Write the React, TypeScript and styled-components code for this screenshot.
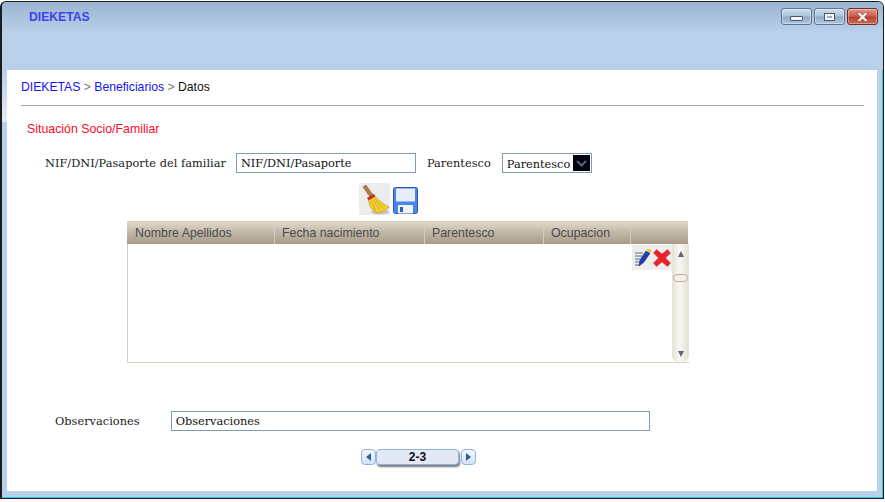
import React from "react";
import styled, { createGlobalStyle } from "styled-components";

const Global = createGlobalStyle`
  html, body { margin: 0; padding: 0; background: #fff; }
  #root { width: 885px; height: 502px; overflow: hidden; }
`;

const Desktop = styled.div`
  width: 885px; height: 502px; background: #fff; overflow: hidden;
  display: flex; flex-direction: column;
`;
const Win = styled.div`
  width: 884px; height: 498px; box-sizing: border-box; flex: none;
  margin-top: 1px;
  border: 1px solid #1c1c1c; border-left-width: 2px; border-bottom-width: 1px;
  border-radius: 6px 6px 0 0;
  background: linear-gradient(#b8d0e9, #e2ebf6) 0 66px / 5px 54px no-repeat, #b8d0e9;
  box-shadow: inset -1px -1px 0 #38c4ea;
  display: flex; flex-direction: column;
`;
const TitleBar = styled.div`
  height: 68px; flex: none; box-sizing: border-box; display: flex; justify-content: space-between; align-items: flex-start;
  background: linear-gradient(#9ab5d2 0, #b8d0e9 30px, #b8d0e9 100%);
  border-radius: 5px 5px 0 0;
  padding: 6px 5px 0 27px;
`;
const AppName = styled.div`
  font: bold 12.2px "Liberation Sans", sans-serif; color: #3f3ff0; line-height: 18px;
`;
const WinBtns = styled.div`display: flex; gap: 2px;`;
const WinBtn = styled.div<{ $close?: boolean }>`
  width: 31px; height: 17px; box-sizing: border-box; border-radius: 3px; display: flex; align-items: center; justify-content: center;
  border: 1px solid ${p => (p.$close ? "#7a2a24" : "#5e7690")};
  background: ${p => p.$close
    ? "linear-gradient(#e39a8c 0, #d0604e 45%, #b8402f 55%, #cf6a56 100%)"
    : "linear-gradient(#cfdff0 0, #abc2da 48%, #8ea9c6 52%, #b0c8e0 100%)"};
  box-shadow: inset 0 0 0 1px rgba(255,255,255,.35);
`;
const MinGlyph = styled.div`width: 11px; height: 3px; margin-top: 4px; background: #f3f5f8; border: 1px solid #46586c; border-radius: 1px;`;
const MaxGlyph = styled.div`width: 5px; height: 2px; border: 2px solid #f3f5f8; outline: 1px solid #46586c;`;
const Panel = styled.div`
  flex: none; height: 421px; margin: 0 6px 0 5px; background: #fff; box-sizing: border-box;
  padding: 10px 13px 0 14px; display: flex; flex-direction: column;
`;
const Crumbs = styled.div`
  font: 12.2px/15px "Liberation Sans", sans-serif; color: #777; height: 25px;
`;
const CrumbLink = styled.span`color: #1414f0;`;
const CrumbHere = styled.span`color: #111;`;
const Rule = styled.div`height: 1px; background: #a9a79f; flex: none;`;
const SectionTitle = styled.div`
  font: 12.35px/15px "Liberation Sans", sans-serif; color: #fb0a2a; margin: 16px 0 0 6px;
`;
const FormRow = styled.div`
  display: flex; align-items: center; margin: 16px 0 0 24px; height: 20px;
`;
const Label = styled.label`
  font: 11.33px "DejaVu Serif", serif; color: #1a1a1a; white-space: nowrap; letter-spacing: 0.03px;
`;
const Field = styled.div<{ $w: number; $gap: number }>`
  width: ${p => p.$w}px; height: 20px; box-sizing: border-box; border: 1px solid #7c9cbb; background: #fff;
  margin-left: ${p => p.$gap}px; flex: none;
  font: 11.33px/19px "DejaVu Serif", serif; color: #111; padding-left: 4px; white-space: nowrap;
`;
const FakeSelect = styled(Field)`
  display: flex; align-items: center; justify-content: space-between; padding-right: 1px;
`;
const SelText = styled.span`margin-top: 2px;`;
const SelArrow = styled.div`
  width: 17px; height: 16px; background: #04040f; display: flex; align-items: center; justify-content: center; flex: none;
`;
const LabelGap = styled.div<{ $w: number }>`width: ${p => p.$w}px; flex: none;`;
const Tools = styled.div`
  display: flex; gap: 3px; margin: 10px 0 0 338px; height: 33px; align-items: flex-start;
`;
const ToolIcon = styled.div`
  width: 31px; height: 32px; background: #ececec; display: flex; align-items: center; justify-content: center;
`;
const PlainIcon = styled.div`margin-top: 4px; width: 25px; height: 27px;`;
const Grid = styled.div`
  width: 562px; margin: 5px 0 0 106px; height: 142px; flex: none; display: flex; flex-direction: column;
  box-sizing: border-box; border: 1px solid #d7d0bf; border-right: none; border-top: none; position: relative;
`;
const GridHead = styled.div`
  display: flex; height: 23px; flex: none; box-sizing: border-box;
  margin-left: -1px; margin-right: 1px;
  border-top: 1px solid #d9cfbd;
  background: linear-gradient(#dfd8cb 0, #c6bcab 40%, #a79b88 100%);
`;
const HeadCell = styled.div<{ $w: number; $last?: boolean; $first?: boolean }>`
  width: ${p => p.$w}px; flex: none; box-sizing: border-box; padding-left: ${p => (p.$first ? 8 : 7)}px;
  font: 12.35px/22px "Liberation Sans", sans-serif; color: #4a4a52;
  border-right: ${p => (p.$last ? "none" : "1px solid #d5ccbb")}; white-space: nowrap;
`;
const GridBody = styled.div`flex: 1; display: flex; justify-content: flex-end; min-height: 0;`;
const RowActions = styled.div`
  display: flex; align-items: center; height: 25px; width: 40px; background: #eeeeee; margin-top: 1px; gap: 1px; padding-left: 2px; box-sizing: border-box;
`;
const Scroll = styled.div`
  width: 17px; flex: none; position: relative; border-radius: 0 0 6px 6px;
  background: linear-gradient(90deg, #e8e1d3 0, #faf8f4 45%, #e5dfd1 100%);
  display: flex; flex-direction: column; align-items: center; justify-content: space-between; padding: 7px 0 5px; box-sizing: border-box;
`;
const Arrow = styled.div<{ $down?: boolean }>`
  width: 0; height: 0; border-left: 3px solid transparent; border-right: 3px solid transparent;
  ${p => (p.$down ? "border-top: 6px solid #666;" : "border-bottom: 6px solid #666;")}
`;
const Thumb = styled.div`
  position: absolute; top: 30px; left: 1px; width: 15px; height: 8px; box-sizing: border-box;
  border: 1px solid #b9b09c; border-radius: 4px; background: #f5f2ea;
`;
const ObsRow = styled.div`
  display: flex; align-items: center; margin: 48px 0 0 34px; height: 20px;
`;
const Pager = styled.div`
  display: flex; align-items: center; margin: 18px 0 0 340px; height: 16px;
`;
const PageArrow = styled.div<{ $gap?: number }>`
  width: 15px; height: 16px; box-sizing: border-box; border: 1px solid #8fb4e0; border-radius: 4px;
  margin-left: ${p => p.$gap ?? 0}px;
  background: linear-gradient(#f4f7fc, #d6e2f3); display: flex; align-items: center; justify-content: center;
`;
const Tri = styled.div<{ $right?: boolean }>`
  width: 0; height: 0; border-top: 4px solid transparent; border-bottom: 4px solid transparent;
  ${p => (p.$right ? "border-left: 5px solid #2a5fa8;" : "border-right: 5px solid #2a5fa8;")}
`;
const PageLabel = styled.div`
  width: 83px; height: 16px; box-sizing: border-box; border: 1px solid #8fb4e0; border-radius: 4px;
  background: #e2e8f6; font: bold 12px/14px "Liberation Sans", sans-serif; color: #111; text-align: center;
  box-shadow: 1px 2px 2px #777;
`;

const Broom = () => (
  <svg width="30" height="31" viewBox="0 0 30 31">
    <ellipse cx="20" cy="28" rx="9" ry="2.4" fill="#c4c4c4" />
    <path d="M3 3 L6 1 L13 11 L10 13Z" fill="#b07d42" stroke="#7d5527" strokeWidth=".5" />
    <path d="M7 14 L14 10 L15.5 12.5 L8.5 16.5Z" fill="#cc2229" />
    <path d="M8.5 16.5 L15.5 12.5 C19 17 25 21 29 23 C26 27 19 30 15 28 C11 25 9 21 8.5 16.5Z" fill="#f1cf2f" stroke="#b8931a" strokeWidth=".6" />
    <path d="M11 18 L16 27 M13 16 L20 26 M15 15 L24 25" stroke="#c9a21d" strokeWidth=".8" fill="none" />
  </svg>
);
const Floppy = () => (
  <svg width="25" height="27" viewBox="0 0 25 27">
    <rect x=".5" y=".5" width="24" height="26" rx="2" fill="#4a86e8" stroke="#2a55b0" />
    <rect x="3" y="1.5" width="19" height="13" fill="#e6ecf8" />
    <rect x="5" y="18" width="15" height="8.5" fill="#f0f3fa" />
    <rect x="7" y="20" width="3" height="5" fill="#2f5fc0" />
  </svg>
);
const Pencil = () => (
  <svg width="18" height="19" viewBox="0 0 18 19">
    <path d="M1 5 H9 M1 8 H8 M1 11 H6 M1 14 H5 M1 17 H5" stroke="#5d6b78" strokeWidth="1.2" />
    <path d="M5 18 L6 12 L12 3 L16 5 L10 14Z" fill="#1f3fb8" stroke="#10206e" strokeWidth=".6" />
    <path d="M12 3 L16 5 L17.5 2 L14 1Z" fill="#e9c23a" />
  </svg>
);
const RedX = () => (
  <svg width="18" height="18" viewBox="0 0 18 18">
    <path d="M3.5 .5 L9 5 L14.5 .5 L17.5 4 L12.5 9 L17.5 14 L14.5 17.5 L9 13 L3.5 17.5 L.5 14 L5.5 9 L.5 4Z" fill="#e8222a" stroke="#c9363a" strokeWidth=".5" />
  </svg>
);

export default function App() {
  return (
    <Desktop>
      <Global />
      <Win>
        <TitleBar>
          <AppName>DIEKETAS</AppName>
          <WinBtns>
            <WinBtn><MinGlyph /></WinBtn>
            <WinBtn><MaxGlyph /></WinBtn>
            <WinBtn $close>
              <svg width="15" height="10" viewBox="0 0 15 10">
                <path d="M1.5 .5 H5 L7.5 3 L10 .5 H13.5 L9.5 5 L13.5 9.5 H10 L7.5 7 L5 9.5 H1.5 L5.5 5Z" fill="#f4f1ef" stroke="#6d2a22" strokeWidth=".5" />
              </svg>
            </WinBtn>
          </WinBtns>
        </TitleBar>
        <Panel>
          <Crumbs>
            <CrumbLink>DIEKETAS</CrumbLink> &gt; <CrumbLink>Beneficiarios</CrumbLink> &gt; <CrumbHere>Datos</CrumbHere>
          </Crumbs>
          <Rule />
          <SectionTitle>Situación Socio/Familiar</SectionTitle>
          <FormRow>
            <Label>NIF/DNI/Pasaporte del familiar</Label>
            <Field $w={180} $gap={10}>NIF/DNI/Pasaporte</Field>
            <LabelGap $w={11} />
            <Label>Parentesco</Label>
            <FakeSelect $w={90} $gap={11}>
              <SelText>Parentesco</SelText>
              <SelArrow>
                <svg width="11" height="7" viewBox="0 0 11 7"><path d="M1 1 L5.5 5.5 L10 1" stroke="#56657c" strokeWidth="2" fill="none" /></svg>
              </SelArrow>
            </FakeSelect>
          </FormRow>
          <Tools>
            <ToolIcon><Broom /></ToolIcon>
            <PlainIcon><Floppy /></PlainIcon>
          </Tools>
          <Grid>
            <GridHead>
              <HeadCell $w={148} $first>Nombre Apellidos</HeadCell>
              <HeadCell $w={150}>Fecha nacimiento</HeadCell>
              <HeadCell $w={119}>Parentesco</HeadCell>
              <HeadCell $w={87}>Ocupacion</HeadCell>
              <HeadCell $w={57} $last />
            </GridHead>
            <GridBody>
              <RowActions><Pencil /><RedX /></RowActions>
              <Scroll>
                <Arrow />
                <Thumb />
                <Arrow $down />
              </Scroll>
            </GridBody>
          </Grid>
          <ObsRow>
            <Label>Observaciones</Label>
            <Field $w={479} $gap={31}>Observaciones</Field>
          </ObsRow>
          <Pager>
            <PageArrow><Tri /></PageArrow>
            <PageLabel>2-3</PageLabel>
            <PageArrow $gap={2}><Tri $right /></PageArrow>
          </Pager>
        </Panel>
      </Win>
    </Desktop>
  );
}
